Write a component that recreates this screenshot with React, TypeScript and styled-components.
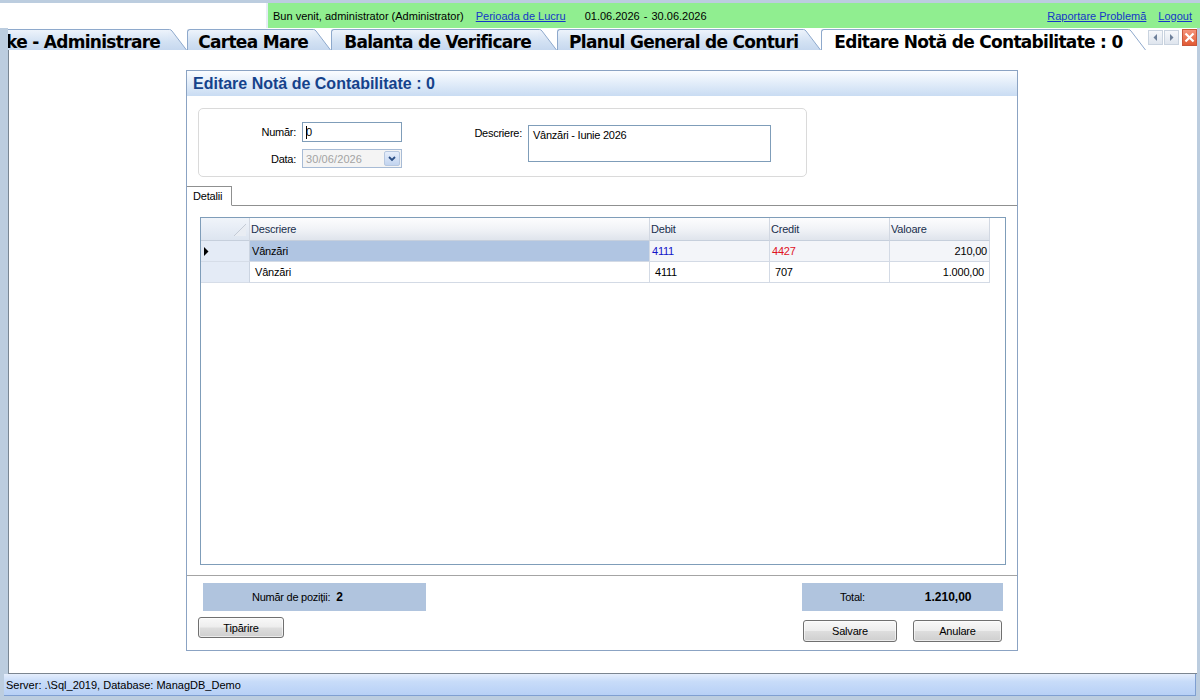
import React from "react";
import styled, { createGlobalStyle } from "styled-components";

const GlobalStyle = createGlobalStyle`
  html, body { margin: 0; padding: 0; }
  body {
    width: 1200px;
    height: 700px;
    overflow: hidden;
    background: #bccddf;
    font-family: "Liberation Sans", Arial, sans-serif;
    color: #000;
  }
  * { box-sizing: border-box; }
`;

const Screen = styled.div`
  width: 1200px;
  height: 700px;
  display: flex;
  flex-direction: column;
  background: #bccddf;
`;

/* ---------- top bar ---------- */
const TopBar = styled.div`
  height: 25px;
  margin-top: 3px;
  display: flex;
  flex-shrink: 0;
`;

const BrandArea = styled.div`
  width: 268px;
  background: #fff;
  border-right: 2px solid #e6edf5;
`;

const Greeting = styled.div`
  flex: 1;
  background: #90ee90;
  display: flex;
  align-items: center;
  padding: 0 8px 0 5px;
  font-size: 11px;
  white-space: nowrap;
`;

const Link = styled.a<{ $gap?: number }>`
  color: #1437c8;
  text-decoration: underline;
  margin-left: ${(p) => p.$gap ?? 0}px;
  cursor: pointer;
`;

const Period = styled.span`
  margin-left: 19px;
  word-spacing: 1px;
`;

const Spacer = styled.div`
  flex: 1;
`;

/* ---------- tab strip ---------- */
const TabStrip = styled.div`
  height: 22px;
  margin: 0 3px 0 8px;
  background: #fff;
  display: flex;
  flex-shrink: 0;
`;

const TabsViewport = styled.div`
  flex: 1;
  display: flex;
  align-items: flex-end;
  overflow: hidden;
`;

const TabItem = styled.div<{ $shift?: number }>`
  display: flex;
  height: 21px;
  flex-shrink: 0;
  margin-left: ${(p) => p.$shift ?? 0}px;
`;

const TabFace = styled.div<{ $active?: boolean; $padLeft: number; $padRight: number }>`
  height: 21px;
  padding: 0 ${(p) => p.$padRight}px 0 ${(p) => p.$padLeft}px;
  border-top: 1px solid #8ea9cc;
  border-left: 1px solid #8ea9cc;
  border-top-left-radius: 3px;
  background: ${(p) =>
    p.$active ? "#ffffff" : "linear-gradient(#edf3fb, #d2e1f3 60%, #c6d8ef)"};
  font-family: "DejaVu Sans", Verdana, sans-serif;
  font-weight: bold;
  font-size: 17px;
  letter-spacing: -0.7px;
  line-height: 24px;
  white-space: nowrap;
  overflow: hidden;
`;

const TabControls = styled.div`
  width: 49px;
  display: flex;
  align-items: flex-start;
  padding-top: 2px;
  gap: 1px;
`;

const ScrollButton = styled.div`
  width: 15px;
  height: 15px;
  border: 1px solid #c9d3df;
  background: linear-gradient(#f6f8fb, #dfe5ee);
  display: flex;
  align-items: center;
  justify-content: center;
`;

const CloseButton = styled.div`
  width: 15px;
  height: 17px;
  margin-left: 2px;
  margin-top: -1px;
  border: 1px solid #c9563a;
  background: linear-gradient(#f4937a, #e15a34);
  display: flex;
  align-items: center;
  justify-content: center;
`;

/* ---------- workspace ---------- */
const Workspace = styled.main`
  flex: 1;
  margin: 0 3px 0 8px;
  background: #fff;
  border-left: 1px solid #7a8794;
  border-bottom: 1px solid #7b8590;
  display: flex;
  justify-content: center;
  padding: 20px 2px 0 0;
`;

const Panel = styled.section`
  width: 832px;
  height: 581px;
  border: 1px solid #8ba3c3;
  display: flex;
  flex-direction: column;
  background: #fff;
`;

const PanelHeader = styled.header`
  height: 25px;
  flex-shrink: 0;
  background: linear-gradient(#fbfdff, #e4eefa 45%, #c9dcf3);
  display: flex;
  align-items: center;
  padding-left: 6px;
  font-family: "Liberation Sans", Arial, sans-serif;
  font-weight: bold;
  font-size: 16px;
  color: #15428b;
`;

const HeaderFields = styled.div`
  margin: 12px 0 0 11px;
  width: 609px;
  height: 69px;
  flex-shrink: 0;
  border: 1px solid #dadada;
  border-radius: 5px;
  display: flex;
  align-items: flex-start;
  padding-top: 13px;
`;

const FieldGrid = styled.div`
  display: grid;
  grid-template-columns: 97px 100px;
  column-gap: 6px;
  row-gap: 7px;
  align-items: center;
`;

const FieldLabel = styled.label<{ $width?: number }>`
  font-size: 11px;
  letter-spacing: -0.25px;
  text-align: right;
  ${(p) => (p.$width ? `width: ${p.$width}px;` : "")}
`;

const TextInput = styled.div`
  height: 20px;
  border: 1px solid #7f9db9;
  background: #fff;
  display: flex;
  align-items: center;
  padding-left: 3px;
  font-size: 11px;
`;

const Caret = styled.span`
  width: 1px;
  height: 13px;
  background: #000;
  margin-right: -1px;
`;

const DateSelect = styled.div`
  height: 19px;
  border: 1px solid #a7bbd5;
  background: #f4f4f4;
  display: flex;
  align-items: center;
  padding-left: 3px;
  font-size: 11px;
  letter-spacing: 0.1px;
  color: #a3a3a3;
`;

const DropButton = styled.div`
  margin-left: auto;
  width: 16px;
  height: 15px;
  margin-right: 1px;
  border: 1px solid #b7c8e0;
  border-radius: 2px;
  background: linear-gradient(#e6eefb, #c2d4ef);
  display: flex;
  align-items: center;
  justify-content: center;
`;

const DescriptionBlock = styled.div`
  display: flex;
  gap: 6px;
  align-items: flex-start;
  padding-top: 3px;
`;

const DescriptionLabel = styled(FieldLabel)`
  padding-top: 2px;
`;

const TextArea = styled.div`
  width: 243px;
  height: 37px;
  border: 1px solid #7f9db9;
  padding: 3px 0 0 4px;
  font-size: 11px;
  letter-spacing: -0.25px;
`;

/* ---------- details tab ---------- */
const DetailsTabRow = styled.div`
  margin-top: 9px;
  display: flex;
  flex-shrink: 0;
  position: relative;
  z-index: 1;
`;

const DetailsTab = styled.div`
  width: 45px;
  height: 20px;
  margin-bottom: -1px;
  border: 1px solid #8f9090;
  border-left: none;
  border-bottom: 1px solid #fff;
  background: #fff;
  font-size: 11px;
  letter-spacing: -0.2px;
  display: flex;
  align-items: center;
  padding-left: 6px;
`;

const TabPage = styled.div`
  flex: 1;
  border-top: 1px solid #8f9090;
  border-bottom: 1px solid #a4a4a4;
  padding: 11px 11px 10px 13px;
  display: flex;
`;

/* ---------- data grid ---------- */
const GridBox = styled.div`
  flex: 1;
  border: 1px solid #7f9db9;
  background: #fff;
  display: flex;
  flex-direction: column;
`;

const GridRow = styled.div`
  display: grid;
  grid-template-columns: 49px 400px 120px 120px 100px;
`;

const HeaderCell = styled.div`
  height: 23px;
  background: linear-gradient(#fdfdfe, #f1f3f7 50%, #dfe4ec);
  border-right: 1px solid #d2d8e2;
  border-bottom: 1px solid #c6cfdc;
  font-size: 11px;
  letter-spacing: -0.2px;
  color: #1a2f4d;
  display: flex;
  align-items: center;
  padding-left: 1px;
`;

const CornerCell = styled(HeaderCell)`
  background: linear-gradient(#f0f4fa, #dde5f0);
  justify-content: flex-end;
  align-items: flex-end;
  padding: 0 2px 3px 0;
`;

const RowHeaderCell = styled.div`
  height: 21px;
  background: #e4ebf6;
  border-right: 1px solid #cbd4e1;
  border-bottom: 1px solid #d6dde8;
  display: flex;
  align-items: center;
  padding-left: 3px;
`;

const Cell = styled.div<{
  $selected?: boolean;
  $current?: boolean;
  $align?: "left" | "right";
  $color?: string;
}>`
  height: 21px;
  border-right: 1px solid #d3dae5;
  border-bottom: 1px solid #d3dae5;
  background: ${(p) => (p.$current ? "#b0c5e2" : p.$selected ? "#f3f5f9" : "#fff")};
  color: ${(p) => p.$color ?? "#000"};
  font-size: 11px;
  letter-spacing: -0.2px;
  display: flex;
  align-items: center;
  justify-content: ${(p) => (p.$align === "right" ? "flex-end" : "flex-start")};
  padding: 0 ${(p) => (p.$selected ? 2 : 5)}px;
`;

/* ---------- footer ---------- */
const Footer = styled.footer`
  height: 74px;
  flex-shrink: 0;
  display: flex;
  justify-content: space-between;
  padding: 7px 14px 0 11px;
`;

const FooterColumn = styled.div<{ $width: number }>`
  width: ${(p) => p.$width}px;
  display: flex;
  flex-direction: column;
`;

const SummaryBox = styled.div<{ $padLeft: number; $indent?: number }>`
  height: 28px;
  background: #b0c4de;
  margin-left: ${(p) => p.$indent ?? 0}px;
  display: flex;
  align-items: center;
  padding-left: ${(p) => p.$padLeft}px;
  font-size: 11px;
  letter-spacing: -0.25px;
`;

const SummaryValue = styled.strong<{ $gap: number }>`
  margin-left: ${(p) => p.$gap}px;
  font-size: 12px;
  letter-spacing: 0;
`;

const ButtonRow = styled.div<{ $top: number; $inset?: number }>`
  display: flex;
  justify-content: space-between;
  margin-top: ${(p) => p.$top}px;
  padding: 0 ${(p) => p.$inset ?? 0}px;
`;

const Button = styled.button<{ $width: number; $height?: number }>`
  width: ${(p) => p.$width}px;
  height: ${(p) => p.$height ?? 21}px;
  border: 1px solid #707070;
  border-radius: 3px;
  background: linear-gradient(#f8f8f8, #ededed 48%, #dddddd 52%, #cfcfcf);
  font-family: "Liberation Sans", Arial, sans-serif;
  font-size: 11px;
  letter-spacing: -0.2px;
  color: #000;
  padding: 0;
  box-shadow: inset 0 0 0 1px rgba(255, 255, 255, 0.6);
`;

/* ---------- status bar ---------- */
const StatusBar = styled.footer`
  height: 22px;
  flex-shrink: 0;
  margin: 0 4px 4px 4px;
  border-right: 1px solid #7f9fd1;
  border-bottom: 1px solid #7f9fd1;
  background: linear-gradient(#e5eefc, #c8dcf9 35%, #b7d0f6);
  display: flex;
  align-items: center;
  padding-left: 2px;
  font-size: 11px;
`;

/* ---------- drawings ---------- */
const Slant = ({ active }: { active?: boolean }) => (
  <svg width="19" height="21" viewBox="0 0 19 21" style={{ flexShrink: 0 }}>
    <defs>
      <linearGradient id="tabg" x1="0" y1="0" x2="0" y2="1">
        <stop offset="0" stopColor="#edf3fb" />
        <stop offset="0.6" stopColor="#d2e1f3" />
        <stop offset="1" stopColor="#c6d8ef" />
      </linearGradient>
    </defs>
    <path d="M0 0.5 H1.5 Q3 0.5 4 2 L18.5 21 H0 Z" fill={active ? "#fff" : "url(#tabg)"} />
    <path d="M0 0.5 H1.5 Q3 0.5 4 2 L18.5 21" fill="none" stroke="#8ea9cc" strokeWidth="1" />
  </svg>
);

const Arrow = ({ dir }: { dir: "left" | "right" }) => (
  <svg width="5" height="7" viewBox="0 0 5 7">
    {dir === "left" ? (
      <polygon points="4,0 4,7 0.5,3.5" fill="#6d7f99" />
    ) : (
      <polygon points="1,0 1,7 4.5,3.5" fill="#6d7f99" />
    )}
  </svg>
);

const CloseGlyph = () => (
  <svg width="11" height="11" viewBox="0 0 11 11">
    <path d="M1.5 1.5 L9.5 9.5 M9.5 1.5 L1.5 9.5" stroke="#fff" strokeWidth="2.2" />
  </svg>
);

const Chevron = () => (
  <svg width="8" height="6" viewBox="0 0 8 6">
    <path d="M1 1 L4 4 L7 1" fill="none" stroke="#2b4f86" strokeWidth="1.8" />
  </svg>
);

const RowPointer = () => (
  <svg width="5" height="9" viewBox="0 0 5 9">
    <polygon points="0,0 0,9 4.5,4.5" fill="#000" />
  </svg>
);

const CornerGrip = () => (
  <svg width="14" height="14" viewBox="0 0 14 14">
    <path d="M13 1 L1 13 H13 Z" fill="#e9edf3" />
    <path d="M13 1 L1 13" stroke="#c4cbd6" strokeWidth="1" />
  </svg>
);

/* ---------- data ---------- */
const tabs = [
  { label: "ke - Administrare", padL: 0, padR: 8, shift: -3 },
  { label: "Cartea Mare", padL: 10, padR: 4 },
  { label: "Balanta de Verificare", padL: 12, padR: 7 },
  { label: "Planul General de Conturi", padL: 11, padR: 4 },
  { label: "Editare Notă de Contabilitate : 0", padL: 12, padR: 4, active: true },
];

type Line = { desc: string; debit: string; credit: string; value: string; selected?: boolean };
const lines: Line[] = [
  { desc: "Vânzări", debit: "4111", credit: "4427", value: "210,00", selected: true },
  { desc: "Vânzări", debit: "4111", credit: "707", value: "1.000,00" },
];

export default function App() {
  return (
    <Screen>
      <GlobalStyle />
      <TopBar>
        <BrandArea />
        <Greeting>
          <span>Bun venit, administrator (Administrator)</span>
          <Link $gap={12}>Perioada de Lucru</Link>
          <Period>01.06.2026 - 30.06.2026</Period>
          <Spacer />
          <Link>Raportare Problemă</Link>
          <Link $gap={12}>Logout</Link>
        </Greeting>
      </TopBar>

      <TabStrip>
        <TabsViewport>
          {tabs.map((t) => (
            <TabItem key={t.label} $shift={t.shift}>
              <TabFace $active={t.active} $padLeft={t.padL} $padRight={t.padR}>
                {t.label}
              </TabFace>
              <Slant active={t.active} />
            </TabItem>
          ))}
        </TabsViewport>
        <TabControls>
          <ScrollButton>
            <Arrow dir="left" />
          </ScrollButton>
          <ScrollButton>
            <Arrow dir="right" />
          </ScrollButton>
          <CloseButton>
            <CloseGlyph />
          </CloseButton>
        </TabControls>
      </TabStrip>

      <Workspace>
        <Panel>
          <PanelHeader>Editare Notă de Contabilitate : 0</PanelHeader>

          <HeaderFields>
            <FieldGrid>
              <FieldLabel>Număr:</FieldLabel>
              <TextInput>
                <Caret />
                0
              </TextInput>
              <FieldLabel>Data:</FieldLabel>
              <DateSelect>
                30/06/2026
                <DropButton>
                  <Chevron />
                </DropButton>
              </DateSelect>
            </FieldGrid>
            <DescriptionBlock>
              <DescriptionLabel $width={120}>Descriere:</DescriptionLabel>
              <TextArea>Vânzări - Iunie 2026</TextArea>
            </DescriptionBlock>
          </HeaderFields>

          <DetailsTabRow>
            <DetailsTab>Detalii</DetailsTab>
          </DetailsTabRow>
          <TabPage>
            <GridBox>
              <GridRow>
                <CornerCell>
                  <CornerGrip />
                </CornerCell>
                <HeaderCell>Descriere</HeaderCell>
                <HeaderCell>Debit</HeaderCell>
                <HeaderCell>Credit</HeaderCell>
                <HeaderCell>Valoare</HeaderCell>
              </GridRow>
              {lines.map((l, i) => (
                <GridRow key={i}>
                  <RowHeaderCell>{l.selected && <RowPointer />}</RowHeaderCell>
                  <Cell $selected={l.selected} $current={l.selected}>
                    {l.desc}
                  </Cell>
                  <Cell $selected={l.selected} $color={l.selected ? "#1414c8" : undefined}>
                    {l.debit}
                  </Cell>
                  <Cell $selected={l.selected} $color={l.selected ? "#e0141e" : undefined}>
                    {l.credit}
                  </Cell>
                  <Cell $selected={l.selected} $align="right">
                    {l.value}
                  </Cell>
                </GridRow>
              ))}
            </GridBox>
          </TabPage>

          <Footer>
            <FooterColumn $width={228}>
              <SummaryBox $indent={5} $padLeft={49}>
                Număr de poziții:
                <SummaryValue $gap={6}>2</SummaryValue>
              </SummaryBox>
              <ButtonRow $top={6}>
                <Button $width={86}>Tipărire</Button>
              </ButtonRow>
            </FooterColumn>
            <FooterColumn $width={201}>
              <SummaryBox $padLeft={38}>
                Total:
                <SummaryValue $gap={60}>1.210,00</SummaryValue>
              </SummaryBox>
              <ButtonRow $top={9} $inset={1}>
                <Button $width={94} $height={22}>
                  Salvare
                </Button>
                <Button $width={89} $height={22}>
                  Anulare
                </Button>
              </ButtonRow>
            </FooterColumn>
          </Footer>
        </Panel>
      </Workspace>

      <StatusBar>Server: .\Sql_2019, Database: ManagDB_Demo</StatusBar>
    </Screen>
  );
}
